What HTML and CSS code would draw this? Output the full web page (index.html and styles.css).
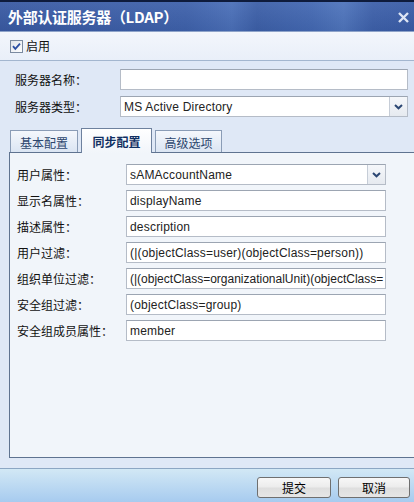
FILE: index.html
```html
<!DOCTYPE html>
<html lang="zh-CN">
<head>
<meta charset="utf-8">
<title>外部认证服务器（LDAP）</title>
<link rel="stylesheet" href="styles.css">
</head>
<body>
<div class="dialog">
  <div class="titlebar">
    <span class="title">外部认证服务器（LDAP）</span>
    <svg class="close" width="11" height="11" viewBox="0 0 11 11"><path d="M1 1 L10 10 M10 1 L1 10" stroke="#dde5f4" stroke-width="2.4" fill="none"/></svg>
  </div>
  <div class="enable-row">
    <svg class="checkbox" width="13" height="13" viewBox="0 0 13 13">
      <defs><linearGradient id="cb" x1="0" y1="0" x2="1" y2="1"><stop offset="0" stop-color="#dfe3ea"/><stop offset="1" stop-color="#ffffff"/></linearGradient></defs>
      <rect x="0.5" y="0.5" width="12" height="12" fill="url(#cb)" stroke="#7b8aa0"/>
      <path d="M3 6.2 L5.3 8.8 L10 3.6" stroke="#2b4ea3" stroke-width="1.8" fill="none"/>
    </svg>
    <span class="cb-label">启用</span>
  </div>
  <div class="content">
    <div class="form-top">
      <div class="row">
        <span class="lbl">服务器名称：</span>
        <div class="input wide"></div>
      </div>
      <div class="row">
        <span class="lbl">服务器类型：</span>
        <div class="input wide select"><span class="val">MS Active Directory</span><span class="trigger"><svg width="9" height="6" viewBox="0 0 9 6"><path d="M1 1 L4.5 4.3 L8 1" stroke="#2b4673" stroke-width="2" fill="none"/></svg></span></div>
      </div>
    </div>
    <div class="tabs">
      <div class="tab t1">基本配置</div>
      <div class="tab t2 active">同步配置</div>
      <div class="tab t3">高级选项</div>
    </div>
    <div class="panel">
      <div class="prow">
        <span class="plbl">用户属性：</span>
        <div class="input pin select"><span class="val">sAMAccountName</span><span class="trigger"><svg width="9" height="6" viewBox="0 0 9 6"><path d="M1 1 L4.5 4.3 L8 1" stroke="#2b4673" stroke-width="2" fill="none"/></svg></span></div>
      </div>
      <div class="prow">
        <span class="plbl">显示名属性：</span>
        <div class="input pin"><span class="val">displayName</span></div>
      </div>
      <div class="prow">
        <span class="plbl">描述属性：</span>
        <div class="input pin"><span class="val">description</span></div>
      </div>
      <div class="prow">
        <span class="plbl">用户过滤：</span>
        <div class="input pin"><span class="val">(|(objectClass=user)(objectClass=person))</span></div>
      </div>
      <div class="prow">
        <span class="plbl">组织单位过滤：</span>
        <div class="input pin"><span class="val tight">(|(objectClass=organizationalUnit)(objectClass=</span></div>
      </div>
      <div class="prow">
        <span class="plbl">安全组过滤：</span>
        <div class="input pin"><span class="val">(objectClass=group)</span></div>
      </div>
      <div class="prow">
        <span class="plbl">安全组成员属性：</span>
        <div class="input pin"><span class="val">member</span></div>
      </div>
    </div>
  </div>
  <div class="footer">
    <button class="btn b1">提交</button>
    <button class="btn b2">取消</button>
  </div>
</div>
</body>
</html>
```
FILE: styles.css
```css
* { box-sizing: border-box; }
html, body { margin: 0; padding: 0; }
body {
  width: 414px;
  height: 502px;
  overflow: hidden;
  font-family: "Noto Sans CJK SC", "Liberation Sans", sans-serif;
  font-size: 12px;
  color: #111;
  background: #dfe8f6;
}
.dialog {
  width: 414px;
  height: 502px;
  display: flex;
  flex-direction: column;
}
.titlebar {
  height: 32px;
  flex: none;
  border-top: 2px solid #0e1b3c;
  border-bottom: 1px solid #8ea3c9;
  background:
    linear-gradient(to bottom, rgba(255,255,255,0.06) 0%, rgba(0,0,0,0.05) 100%),
    linear-gradient(to right, #395aa3 0%, #3e61ab 45%, #4a6fb8 56%, #3c5fa8 62%, #4368b2 75%, #4e74bc 83%, #3d60aa 90%, #395ca7 100%);
  display: flex;
  align-items: center;
  justify-content: space-between;
  padding: 0 5px 0 8px;
}
.title {
  color: #ffffff;
  font-weight: bold;
  font-size: 15px;
  line-height: 18px;
  letter-spacing: -0.3px;
}
.close { display: block; margin-top: 1px; }
.enable-row {
  height: 29px;
  flex: none;
  background: linear-gradient(to bottom, #f3f6fc, #e9eff9);
  border-bottom: 1px solid #a3b6cf;
  display: flex;
  align-items: center;
  padding-left: 10px;
  gap: 3px;
}
.checkbox { display: block; }
.cb-label { font-size: 12px; line-height: 14px; color: #111; }
.content {
  flex: 1;
  display: flex;
  flex-direction: column;
  padding-top: 8px;
  background: #dfe8f6;
}
.form-top {
  display: flex;
  flex-direction: column;
  gap: 6px;
  padding-left: 15px;
}
.row { display: flex; align-items: center; }
.lbl { width: 105px; line-height: 14px; }
.input {
  height: 21px;
  background: #ffffff;
  border: 1px solid #b5bcc7;
  border-top-color: #9ca5b2;
  display: flex;
  align-items: center;
  overflow: hidden;
  position: relative;
}
.input.wide { width: 288px; }
.input.pin { width: 260px; }
.val {
  font-family: "Liberation Sans", Arial, sans-serif;
  font-size: 12px;
  letter-spacing: 0.2px;
  color: #222;
  white-space: nowrap;
  padding-left: 3px;
  flex: 1;
  overflow: hidden;
}
.val.tight { letter-spacing: 0; }
.trigger {
  width: 18px;
  height: 100%;
  flex: none;
  border-left: 1px solid #c6cdd7;
  background: linear-gradient(to bottom, #f5f7fa, #e6eaf0);
  display: flex;
  align-items: center;
  justify-content: center;
}
.trigger svg { display: block; }
.tabs {
  display: flex;
  align-items: flex-end;
  margin-top: 13px;
  padding-left: 10px;
  gap: 3px;
  height: 22px;
  position: relative;
  z-index: 1;
}
.tab {
  height: 22px;
  border: 1px solid #8a9cb6;
  border-bottom: none;
  background: linear-gradient(to bottom, #f4f7fc, #dbe5f3);
  color: #2c466d;
  font-size: 12px;
  line-height: 14px;
  display: flex;
  align-items: center;
  justify-content: center;
  padding-top: 2px;
}
.t1 { width: 68px; }
.t2 { width: 71px; }
.t3 { width: 67px; }
.tab.active {
  height: 25px;
  margin-bottom: -1px;
  background: linear-gradient(to bottom, #ffffff, #f1f5fa);
  border-color: #6e819e;
  color: #102f62;
  font-weight: bold;
}
.panel {
  flex: 1;
  margin-left: 9px;
  margin-bottom: 10px;
  border: 1px solid #5f7390;
  border-right: none;
  background: #f1f5fa;
  padding: 11px 0 0 7px;
  display: flex;
  flex-direction: column;
  gap: 5px;
}
.prow { display: flex; align-items: center; }
.plbl { width: 109px; line-height: 14px; }
.footer {
  height: 34px;
  flex: none;
  border-top: 1px solid #8ca6c3;
  background: linear-gradient(to bottom, #d2e8f5, #a7cbef);
  display: flex;
  justify-content: flex-end;
  align-items: flex-start;
  padding: 8px 4px 0 0;
  gap: 7px;
}
.btn {
  height: 21px;
  border: 1px solid #6f6f6f;
  border-radius: 3px;
  background: linear-gradient(to bottom, #f7f7f7 0%, #ececec 48%, #dedede 52%, #e6e6e6 100%);
  font-family: "Noto Sans CJK SC", sans-serif;
  font-size: 12px;
  line-height: 14px;
  color: #000;
  padding: 0;
  margin: 0;
}
.b1 { width: 74px; }
.b2 { width: 72px; }
```
